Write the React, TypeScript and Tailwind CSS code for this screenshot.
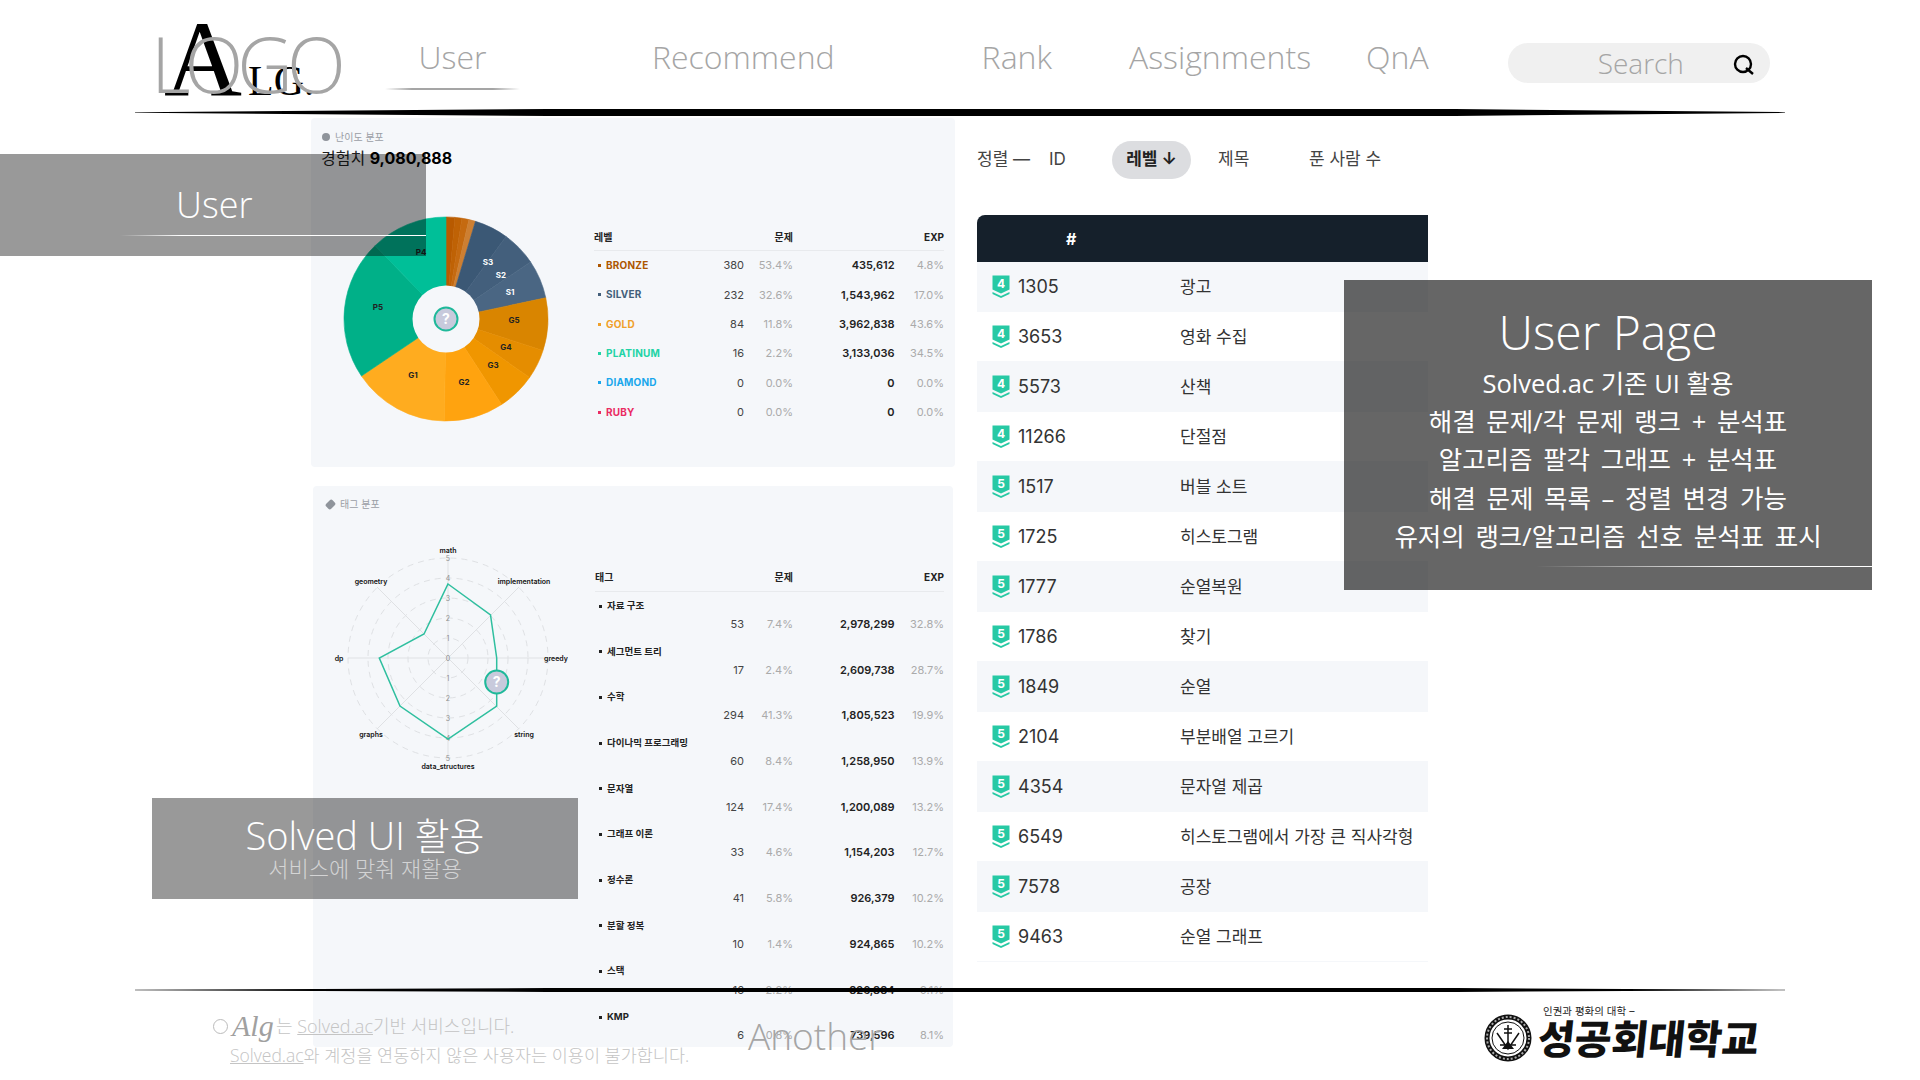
const sans = "font-['Inter','Noto_Sans_CJK_KR',sans-serif]";
const slide = "font-['Open_Sans','Noto_Sans_CJK_KR',sans-serif]";

const slices = [
  { from: 0, to: 5, fill: "#b85a00" },
  { from: 5, to: 9, fill: "#bf6205" },
  { from: 9, to: 13, fill: "#c56a10" },
  { from: 13, to: 16.8, fill: "#cd7f32" },
  { from: 16.8, to: 36, fill: "#3b5875" },
  { from: 36, to: 56, fill: "#435f7c" },
  { from: 56, to: 78, fill: "#4a6683" },
  { from: 78, to: 108, fill: "#d98500" },
  { from: 108, to: 125, fill: "#e58d00" },
  { from: 125, to: 147, fill: "#f09600" },
  { from: 147, to: 181, fill: "#ffa30f" },
  { from: 181, to: 236, fill: "#ffac1f" },
  { from: 236, to: 316, fill: "#00b088" },
  { from: 316, to: 360, fill: "#00bf98" },
];

const pieLabels = [
  ["S3", 150, 54, "#fff"],
  ["S2", 163, 67, "#fff"],
  ["S1", 172, 84, "#fff"],
  ["G5", 176, 112, "#222"],
  ["G4", 168, 139, "#222"],
  ["G3", 155, 157, "#222"],
  ["G2", 126, 174, "#222"],
  ["G1", 75, 167, "#222"],
  ["P5", 40, 99, "#222"],
  ["P4", 83, 44, "#222"],
];

const levels = [
  { name: "BRONZE", color: "#ad5600", count: "380", pct: "53.4%", exp: "435,612", expPct: "4.8%" },
  { name: "SILVER", color: "#435f7a", count: "232", pct: "32.6%", exp: "1,543,962", expPct: "17.0%" },
  { name: "GOLD", color: "#f0a028", count: "84", pct: "11.8%", exp: "3,962,838", expPct: "43.6%" },
  { name: "PLATINUM", color: "#22d3a5", count: "16", pct: "2.2%", exp: "3,133,036", expPct: "34.5%" },
  { name: "DIAMOND", color: "#1aa7ec", count: "0", pct: "0.0%", exp: "0", expPct: "0.0%" },
  { name: "RUBY", color: "#ea2b62", count: "0", pct: "0.0%", exp: "0", expPct: "0.0%" },
];

const tags = [
  ["자료 구조", "53", "7.4%", "2,978,299", "32.8%"],
  ["세그먼트 트리", "17", "2.4%", "2,609,738", "28.7%"],
  ["수학", "294", "41.3%", "1,805,523", "19.9%"],
  ["다이나믹 프로그래밍", "60", "8.4%", "1,258,950", "13.9%"],
  ["문자열", "124", "17.4%", "1,200,089", "13.2%"],
  ["그래프 이론", "33", "4.6%", "1,154,203", "12.7%"],
  ["정수론", "41", "5.8%", "926,379", "10.2%"],
  ["분할 정복", "10", "1.4%", "924,865", "10.2%"],
  ["스택", "16", "2.2%", "826,884", "9.1%"],
  ["KMP", "6", "0.8%", "739,596", "8.1%"],
];

const problems = [
  [4, "1305", "광고"],
  [4, "3653", "영화 수집"],
  [4, "5573", "산책"],
  [4, "11266", "단절점"],
  [5, "1517", "버블 소트"],
  [5, "1725", "히스토그램"],
  [5, "1777", "순열복원"],
  [5, "1786", "찾기"],
  [5, "1849", "순열"],
  [5, "2104", "부분배열 고르기"],
  [5, "4354", "문자열 제곱"],
  [5, "6549", "히스토그램에서 가장 큰 직사각형"],
  [5, "7578", "공장"],
  [5, "9463", "순열 그래프"],
];

const radarLabels = [
  ["math", 120, 10],
  ["implementation", 196, 41],
  ["greedy", 228, 118],
  ["string", 196, 194],
  ["data_structures", 120, 226],
  ["graphs", 43, 194],
  ["dp", 11, 118],
  ["geometry", 43, 41],
];

const sliceCenter = 108;

function slicePath(from: number, to: number) {
  const r = 102;
  const a = ((from - 90) * Math.PI) / 180;
  const b = ((to - 90) * Math.PI) / 180;
  const large = to - from > 180 ? 1 : 0;
  const c = sliceCenter;
  return `M${c} ${c}L${c + r * Math.cos(a)} ${c + r * Math.sin(a)}A${r} ${r} 0 ${large} 1 ${c + r * Math.cos(b)} ${c + r * Math.sin(b)}Z`;
}

function QuestionBadge({ x, y }: { x: number; y: number }) {
  return (
    <g>
      <circle cx={x} cy={y} r={11.5} fill="#c8cadc" stroke="#1fb99a" strokeWidth={2} />
      <text x={x} y={y + 5} textAnchor="middle" fontSize={14} fontWeight={700} fill="#fff" fontFamily="Inter">
        ?
      </text>
    </g>
  );
}

function PieChart() {
  return (
    <svg width={216} height={216} className="shrink-0">
      {slices.map((s) => (
        <path key={s.from} d={slicePath(s.from, s.to)} fill={s.fill} stroke={s.fill} strokeWidth={0.6} />
      ))}
      <circle cx={sliceCenter} cy={sliceCenter} r={33.5} fill="#f5f7fa" />
      <QuestionBadge x={sliceCenter} y={sliceCenter} />
      {pieLabels.map(([label, x, y, color]) => (
        <text key={label as string} x={x as number} y={y as number} textAnchor="middle" fontSize={8} fontWeight={700} fill={color as string} fontFamily="Inter">
          {label}
        </text>
      ))}
    </svg>
  );
}

function RadarChart() {
  const c = 120;
  const cy = 118;
  const points = [
    [c, cy - 74],
    [c + 42.5, cy - 43],
    [c + 48.7, cy],
    [c + 48.7, cy + 48],
    [c, cy + 81],
    [c - 48, cy + 48],
    [c - 68.7, cy],
    [c - 24, cy - 24],
  ];
  const spokes = [
    [c, cy - 100, c, cy + 100],
    [c - 100, cy, c + 100, cy],
    [c - 71, cy - 71, c + 71, cy + 71],
    [c - 71, cy + 71, c + 71, cy - 71],
  ];
  return (
    <svg width={240} height={240} className="shrink-0">
      {[20, 40, 60, 80, 100].map((r) => (
        <circle key={r} cx={c} cy={cy} r={r} fill="none" stroke="#dfe1e4" strokeDasharray="6 5" />
      ))}
      {spokes.map((s, i) => (
        <line key={i} x1={s[0]} y1={s[1]} x2={s[2]} y2={s[3]} stroke="#dfe1e4" />
      ))}
      {[5, 4, 3, 2, 1, 0].map((n) => (
        <text key={n} x={c} y={cy - n * 20 + 3} textAnchor="middle" fontSize={7} fill="#8f8f8f" fontFamily="Inter">
          {n}
        </text>
      ))}
      {[1, 2, 3, 4, 5].map((n) => (
        <text key={n} x={c} y={cy + n * 20 + 3} textAnchor="middle" fontSize={7} fill="#8f8f8f" fontFamily="Inter">
          {n}
        </text>
      ))}
      <polygon points={points.map((p) => p.join(",")).join(" ")} fill="none" stroke="#2fbf9f" strokeWidth={1.5} />
      <QuestionBadge x={168.7} y={142} />
      {radarLabels.map(([label, x, y]) => (
        <text key={label as string} x={x as number} y={(y as number) + 2.5} textAnchor="middle" fontSize={7} fontWeight={600} fill="#111" fontFamily="Inter">
          {label}
        </text>
      ))}
    </svg>
  );
}

function TierBadge({ tier }: { tier: number }) {
  return (
    <svg width={18} height={23} viewBox="0 0 18 23" className="shrink-0">
      <path d="M0.5 0.5H17.5V14.5L9 18.5L0.5 14.5Z" fill="#27c9a4" />
      <path d="M0.5 17L9 21L17.5 17V19L9 23L0.5 19Z" fill="#27c9a4" />
      <text x={9} y={12.5} textAnchor="middle" fontSize={12} fontWeight={700} fill="#fff" fontFamily="Inter">
        {tier}
      </text>
    </svg>
  );
}

function Divider({ className }: { className: string }) {
  return <div className={`w-[1650px] bg-black [clip-path:polygon(0_45%,25%_0,80%_0,100%_45%,100%_55%,80%_100%,25%_100%,0_55%)] ${className}`} />;
}

function LevelTable() {
  return (
    <div className={`ml-[40px] mt-[17px] w-[350px] text-[11px] ${sans}`}>
      <div className="grid h-[23px] grid-cols-[100px_50px_49px_101.5px_49.5px] items-center border-b border-[#e8eaed] pb-[4px] text-[10px] font-bold text-[#222]">
        <span>레벨</span>
        <span />
        <span className="text-right">문제</span>
        <span />
        <span className="text-right">EXP</span>
      </div>
      {levels.map((l) => (
        <div key={l.name} className="grid h-[29.3px] grid-cols-[100px_50px_49px_101.5px_49.5px] items-center">
          <span className="flex items-center gap-[5px] pl-[4px] text-[10px] font-bold tracking-[0.2px]" style={{ color: l.color }}>
            <span className="h-[3px] w-[3px]" style={{ backgroundColor: l.color }} />
            {l.name}
          </span>
          <span className="text-right text-[#444]">{l.count}</span>
          <span className="text-right text-[#aaa]">{l.pct}</span>
          <span className="text-right font-semibold text-[#222]">{l.exp}</span>
          <span className="text-right text-[#aaa]">{l.expPct}</span>
        </div>
      ))}
    </div>
  );
}

function TagTable() {
  return (
    <div className={`ml-[27px] mt-[28px] w-[349px] text-[11px] ${sans}`}>
      <div className="grid h-[24px] grid-cols-[99px_50px_49px_101.5px_49.5px] items-center border-b border-[#e8eaed] pb-[4px] text-[10px] font-bold text-[#222]">
        <span>태그</span>
        <span />
        <span className="text-right">문제</span>
        <span />
        <span className="text-right">EXP</span>
      </div>
      {tags.map(([name, count, pct, exp, expPct]) => (
        <div key={name} className="h-[45.7px] pt-[7px]">
          <div className="flex h-[14px] items-center gap-[5px] pl-[4px] text-[9.5px] font-bold text-[#222]">
            <span className="h-[3px] w-[3px] bg-[#222]" />
            {name}
          </div>
          <div className="mt-[3px] grid h-[14px] grid-cols-[99px_50px_49px_101.5px_49.5px] items-center">
            <span />
            <span className="text-right text-[#444]">{count}</span>
            <span className="text-right text-[#aaa]">{pct}</span>
            <span className="text-right font-semibold text-[#222]">{exp}</span>
            <span className="text-right text-[#aaa]">{expPct}</span>
          </div>
        </div>
      ))}
    </div>
  );
}

function ProblemList() {
  return (
    <div className={sans}>
      <div className="flex h-[38px] items-center text-[17px] text-[#444]">
        <span className="w-[72px]">정렬 —</span>
        <span className="w-[63px]">ID</span>
        <span className="flex h-[38px] w-[79px] items-center justify-center rounded-full bg-[#dcdde0] font-bold text-[#222]">레벨 ↓</span>
        <span className="ml-[27px] w-[91px]">제목</span>
        <span>푼 사람 수</span>
      </div>
      <div className="mt-[36px] h-[47px] rounded-tl-lg bg-[#15202b] pl-[89px] pt-[12px] text-[16px] font-bold text-white">#</div>
      {problems.map(([tier, id, title], i) => (
        <div key={id} className={`flex h-[50px] items-center border-b border-[#f5f7fa] pl-[15px] ${i % 2 === 0 ? "bg-[#f5f7fa]" : "bg-white"}`}>
          <TierBadge tier={tier as number} />
          <span className="ml-[8px] w-[162px] text-[18px] text-[#333]">{id}</span>
          <span className="pt-[2px] text-[17px] text-[#333]">{title}</span>
        </div>
      ))}
    </div>
  );
}

function Emblem() {
  return (
    <svg width={48} height={48} viewBox="0 0 48 48" className="shrink-0">
      <circle cx={24} cy={24} r={21} fill="#fff" stroke="#111" strokeWidth={5} />
      <circle cx={24} cy={24} r={21} fill="none" stroke="#aaa" strokeWidth={2} strokeDasharray="2 2" />
      <circle cx={24} cy={24} r={16} fill="none" stroke="#111" strokeWidth={1} />
      <path d="M24 11V29M20 15H28M20 19H28M13 19L24 35L35 19M16 31H32" fill="none" stroke="#111" strokeWidth={1.5} />
      <path d="M18 35H30L24 27Z" fill="#111" />
    </svg>
  );
}

export default function App() {
  return (
    <div className={`relative h-[1080px] w-[1920px] overflow-hidden bg-white ${slide}`}>
      <header className="flex h-[109px] items-start">
        <div className="relative ml-[155px] h-[109px] w-[230px]">
          <span className="absolute left-[9px] top-[10px] font-['Liberation_Serif',serif] text-[108px] leading-[100px] text-black">A</span>
          <span className="absolute left-[93px] top-[60px] font-['Liberation_Serif',serif] text-[42px] leading-[42px] text-black">LG.</span>
          <span className="absolute -left-[4px] top-[14px] text-[77px] font-light leading-[100px] tracking-[-6px] text-[#a5a5a5]">LOGO</span>
        </div>
        <nav className="flex items-start pt-[33px] text-[32px] font-light leading-[48px] text-[#a5a5a5]">
          <div className="flex w-[135px] flex-col items-center">
            <span>User</span>
            <span className="mt-[7px] h-[2px] w-full bg-[linear-gradient(90deg,transparent,#a5a5a5_20%,#a5a5a5_80%,transparent)]" />
          </div>
          <span className="ml-[132px]">Recommend</span>
          <span className="ml-[147px]">Rank</span>
          <span className="ml-[77px]">Assignments</span>
          <span className="ml-[55px]">QnA</span>
        </nav>
        <div className="ml-[79px] mt-[43px] flex h-[40px] w-[262px] items-center rounded-full bg-[#f0f0f0] pl-[90px]">
          <span className="w-[135px] text-[28px] font-light text-[#a5a5a5]">Search</span>
          <svg width={22} height={22} viewBox="0 0 22 22" className="mt-[3px]">
            <circle cx={10} cy={10} r={8} fill="none" stroke="#000" strokeWidth={2.4} />
            <path d="M13 14L20 20" stroke="#000" strokeWidth={2.4} />
          </svg>
        </div>
      </header>
      <Divider className="ml-[135px] h-[7px]" />
      <main className="ml-[311px] mt-[2px] flex items-start">
        <div className="w-[644px]">
          <section className="h-[349px] rounded bg-[#f5f7fa] pl-[11px] pt-[12px]">
            <div className={`flex h-[14px] items-center gap-[5px] text-[10px] text-[#9a9ea5] ${sans}`}>
              <span className="h-[8px] w-[8px] rounded-full bg-[#8f949b]" />
              난이도 분포
            </div>
            <div className={`-ml-[1px] mt-[3px] h-[22px] text-[16px] leading-[22px] text-[#222] ${sans}`}>
              경험치 <span className="font-bold text-black">9,080,888</span>
            </div>
            <div className="ml-[16px] mt-[42px] flex items-start">
              <PieChart />
              <LevelTable />
            </div>
          </section>
          <section className="ml-[2px] mt-[19px] h-[561px] w-[640px] rounded bg-[#f5f7fa] pt-[11px]">
            <div className={`flex h-[14px] items-center gap-[5px] pl-[13px] text-[10px] text-[#9a9ea5] ${sans}`}>
              <span className="h-[7px] w-[9px] -rotate-45 rounded-[2px] bg-[#8f949b]" />
              태그 분포
            </div>
            <div className="ml-[15px] mt-[29px] flex items-start">
              <RadarChart />
              <TagTable />
            </div>
          </section>
        </div>
        <div className="ml-[22px] mt-[23px] w-[451px]">
          <ProblemList />
        </div>
      </main>

      {/* overlays from the slide */}
      <div className="absolute left-0 top-[154px] flex h-[102px] w-[426px] flex-col bg-black/40 pl-[176px] text-white">
        <span className="mt-[21px] text-[36px] font-light leading-[60px]">User</span>
        <span className="-ml-[56px] h-px bg-[linear-gradient(90deg,transparent,#fff_20%)]" />
      </div>
      <div className="absolute left-[152px] top-[798px] flex h-[101px] w-[426px] flex-col items-center bg-black/40 pt-[12px] text-white">
        <span className="text-[38px] font-light leading-[50px]">Solved UI 활용</span>
        <span className="-mt-[6px] text-[22px] font-light leading-[28px] text-white/60">서비스에 맞춰 재활용</span>
      </div>
      <div className="absolute left-[1344px] top-[280px] flex h-[310px] w-[528px] flex-col items-center bg-black/60 pt-[20px] text-white">
        <span className="text-[48px] font-light leading-[64px]">User Page</span>
        <div className="text-center text-[25.5px] leading-[38.2px] [word-spacing:4px]">
          <p className="[word-spacing:0]">Solved.ac 기존 UI 활용</p>
          <p>해결 문제/각 문제 랭크 + 분석표</p>
          <p>알고리즘 팔각 그래프 + 분석표</p>
          <p>해결 문제 목록 – 정렬 변경 가능</p>
          <p>유저의 랭크/알고리즘 선호 분석표 표시</p>
        </div>
        <span className="mt-[11px] h-px w-[336px] self-end bg-[linear-gradient(90deg,transparent,#fff_60%)]" />
      </div>

      {/* footer sits on top of the tag panel */}
      <Divider className="absolute left-[135px] top-[988px] h-[4px]" />
      <div className="absolute left-[213px] top-[1012px] text-[18px] font-light leading-[28px] text-[#c4c4c4]">
        <div className="flex items-center">
          <span className="h-[15px] w-[15px] rounded-full border border-[#bbb]" />
          <span className="ml-[4px] w-[44px] font-['Liberation_Serif',serif] text-[30px] italic leading-[28px] text-[#a0a0a0]">Alg</span>
          <span>는 <span className="underline">Solved.ac</span>기반 서비스입니다.</span>
        </div>
        <div className="ml-[17px] mt-[1px] text-[17.5px]">
          <span className="underline">Solved.ac</span>와 계정을 연동하지 않은 사용자는 이용이 불가합니다.
        </div>
      </div>
      <span className="absolute left-[748px] top-[1009px] text-[37px] font-light leading-[54px] text-[#a5a5a5]">Another</span>
      <div className="absolute left-[1484px] top-[1005px] flex items-end gap-[6px]">
        <Emblem />
        <div className="flex flex-col">
          <span className={`ml-[5px] text-[10.5px] leading-[13px] text-[#222] ${sans}`}>인권과 평화의 대학 –</span>
          <span className={`-skew-x-6 text-[40px] font-black leading-[44px] text-[#111] ${sans}`}>성공회대학교</span>
        </div>
      </div>
    </div>
  );
}
